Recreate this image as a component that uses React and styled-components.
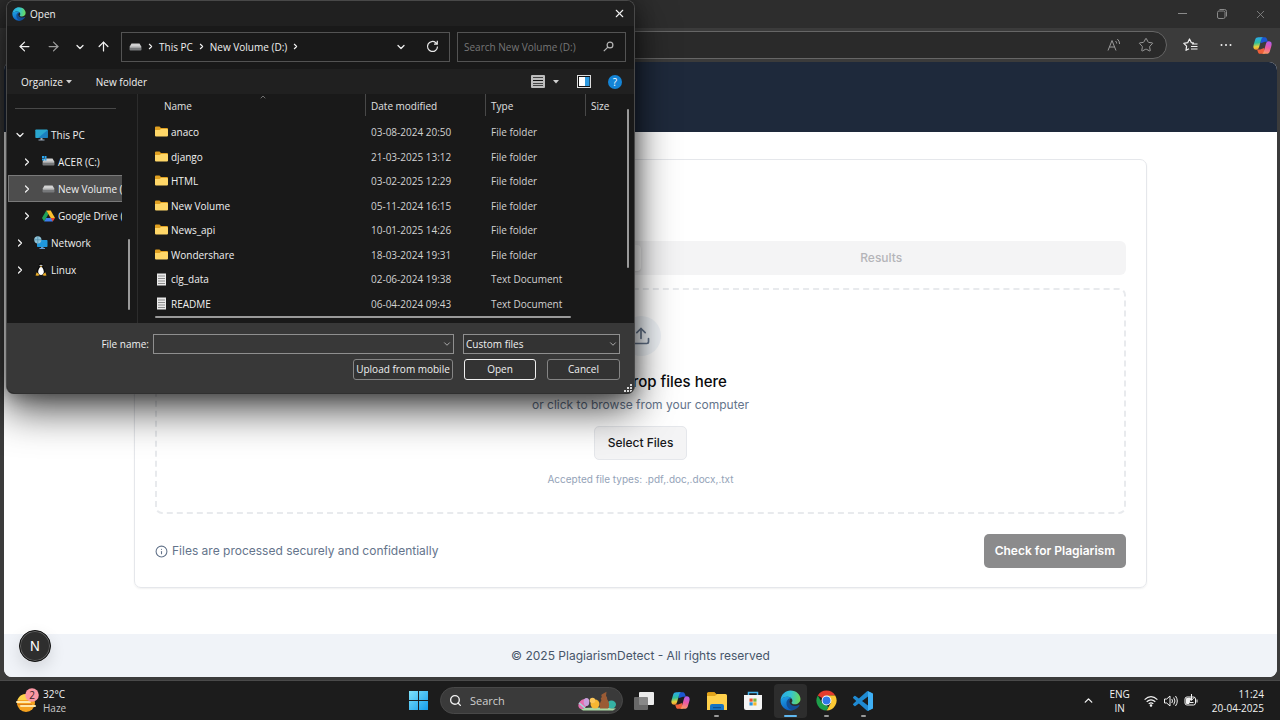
import React from "react";
import styled, { createGlobalStyle, css } from "styled-components";
import {
  ArrowLeft,
  ArrowRight,
  ArrowUp,
  ChevronDown,
  ChevronRight,
  ChevronUp,
  Info,
  Search,
  Star,
  Upload,
  X,
} from "lucide-react";

const ui = '"Open Sans", "Noto Sans", sans-serif';
const web = 'Inter, "Liberation Sans", sans-serif';

const GlobalStyle = createGlobalStyle`
  *, *::before, *::after { box-sizing: border-box; }
  body { margin: 0; background: #3b3b3b; }
  button, input, select { font: inherit; color: inherit; margin: 0; }
  svg { display: block; flex: none; }
`;

const Desktop = styled.div`
  position: relative;
  display: flex;
  flex-direction: column;
  min-height: 100vh;
  font-family: ${ui};
  font-size: 10px;
  line-height: 14px;
`;

const PlainButton = styled.button`
  display: flex;
  align-items: center;
  justify-content: center;
  padding: 0;
  border: 0;
  background: none;
  cursor: pointer;
`;

/* Browser window */

const WindowBar = styled.div`
  display: flex;
  justify-content: flex-end;
  height: 28px;
  background: #2d2d2d;
  color: #8a8a8a;
`;

const WindowButton = styled(PlainButton)`
  width: 39px;
`;

const BrowserBar = styled.div`
  display: flex;
  align-items: center;
  height: 34px;
  padding: 0 0 0 120px;
  background: #3b3b3b;
`;

const UrlBar = styled.div`
  flex: 1;
  display: flex;
  align-items: center;
  justify-content: flex-end;
  gap: 17px;
  height: 28px;
  padding-right: 12px;
  border: 1px solid #666;
  border-radius: 14px;
  background: #2a2a2a;
  color: #9a9a9a;
`;

const BrowserTools = styled.div`
  display: flex;
  width: 113px;
  padding-left: 5px;
  color: #f2f2f2;
`;

const BrowserTool = styled(PlainButton)`
  width: 36px;
`;

/* Web page */

const Page = styled.div`
  flex: 1;
  display: flex;
  flex-direction: column;
  margin: 0 3px 4px 4px;
  overflow: hidden;
  border-radius: 8px;
  background: #fff;
  font-family: ${web};
  font-size: 12px;
  line-height: 16px;
`;

const PageHeader = styled.header`
  height: 70px;
  background: #1e293b;
`;

const PageMain = styled.main`
  flex: 1;
  padding: 27px 24px;
`;

const Card = styled.section`
  max-width: 1013px;
  margin: 0 auto;
  padding: 81px 20px 19px;
  border: 1px solid #e5e7eb;
  border-radius: 7px;
  box-shadow: 0 1px 2px rgba(0, 0, 0, 0.06);
`;

const Tabs = styled.div`
  display: grid;
  grid-template-columns: 1fr 1fr;
  height: 34px;
  padding: 4px;
  border-radius: 6px;
  background: #f4f4f5;
`;

const Tab = styled.button`
  border: 0;
  border-radius: 4px;
  background: ${(p) => (p.$active ? "#fff" : "transparent")};
  box-shadow: ${(p) => (p.$active ? "0 1px 2px rgba(0,0,0,.1)" : "none")};
  color: ${(p) => (p.$active ? "#09090b" : "#b4b4b9")};
  font-weight: 500;
`;

const DropZone = styled.div`
  display: flex;
  flex-direction: column;
  align-items: center;
  margin: 13px 0 20px;
  padding: 26px 20px 25px;
  border: 2px dashed #e8eaed;
  border-radius: 7px;
`;

const UploadBadge = styled.div`
  display: grid;
  place-items: center;
  width: 40px;
  height: 40px;
  border-radius: 50%;
  background: #f1f5f9;
  color: #64748b;
`;

const DropTitle = styled.h3`
  margin: 16px 0 4px;
  color: #09090b;
  font-size: 15px;
  line-height: 20px;
  font-weight: 500;
`;

const DropHint = styled.p`
  margin: 0;
  padding: 1px 0;
  color: #64748b;
`;

const SelectFiles = styled.button`
  height: 34px;
  margin: 12px 0;
  padding: 0 13px;
  border: 1px solid #e5e7eb;
  border-radius: 5px;
  background: #f4f4f5;
  color: #18181b;
  font-weight: 500;
`;

const Accepted = styled.p`
  margin: 0;
  color: #94a3b8;
  font-size: 10px;
  line-height: 15px;
`;

const CardFooter = styled.div`
  display: flex;
  align-items: center;
  justify-content: space-between;
`;

const SecureNote = styled.p`
  display: flex;
  align-items: center;
  gap: 4px;
  margin: 0;
  color: #64748b;
`;

const CheckButton = styled.button`
  height: 34px;
  padding: 0 11px;
  border: 0;
  border-radius: 5px;
  background: #8b8b8c;
  color: #fff;
  font-weight: 600;
`;

const PageFooter = styled.footer`
  display: flex;
  align-items: center;
  justify-content: center;
  height: 43px;
  background: #f0f3f8;
  color: #475569;
`;

const NextBadge = styled.button`
  position: absolute;
  left: 19px;
  bottom: 58px;
  width: 32px;
  height: 32px;
  padding: 0;
  border: 1px solid #111;
  border-radius: 50%;
  background: #2e2e2e;
  box-shadow: 0 0 0 1px #666 inset, 0 6px 16px rgba(0, 0, 0, 0.12);
  color: #fff;
  font-family: ${web};
  font-size: 13px;
`;

/* File dialog */

const Dialog = styled.section`
  position: absolute;
  top: 0;
  left: 6px;
  display: flex;
  flex-direction: column;
  width: 629px;
  overflow: hidden;
  border: 1px solid #484848;
  border-bottom-color: #303030;
  border-radius: 8px;
  background: #191919;
  box-shadow: 0 16px 40px rgba(0, 0, 0, 0.7), 0 2px 18px rgba(0, 0, 0, 0.35);
  color: #f0f0f0;
`;

const DialogTitle = styled.header`
  display: flex;
  align-items: center;
  gap: 4px;
  height: 25px;
  padding: 0 8px 0 5px;
  background: #202020;
`;

const DialogHeading = styled.h2`
  flex: 1;
  margin: 0;
  font-size: 10px;
  font-weight: 400;
`;

const DialogNav = styled.nav`
  display: flex;
  align-items: center;
  height: 43px;
  padding: 0 8px 2px 3px;
`;

const NavButton = styled(PlainButton)`
  width: ${(p) => p.$width || 29}px;
  height: 28px;
  color: ${(p) => (p.$dim ? "#9c9c9c" : "#f0f0f0")};
`;

const AddressBox = styled.div`
  flex: 1;
  display: flex;
  align-items: center;
  gap: 4px;
  height: 30px;
  margin-left: 5px;
  padding: 0 3px 0 7px;
  border: 1px solid #535353;
`;

const Crumb = styled(PlainButton)`
  height: 28px;
`;

const Spacer = styled.span`
  flex: 1;
`;

const SearchBox = styled.label`
  display: flex;
  align-items: center;
  width: 169px;
  height: 30px;
  margin-left: 7px;
  padding: 0 11px 0 6px;
  border: 1px solid #535353;
  color: #b5b5b5;
`;

const SearchInput = styled.input`
  flex: 1;
  min-width: 0;
  padding: 0;
  border: 0;
  outline: 0;
  background: none;
  &::placeholder { color: #777; opacity: 1; }
`;

const CommandBar = styled.div`
  display: flex;
  align-items: center;
  height: 25px;
  padding: 0 12px 0 14px;
  background: #202020;
`;

const Command = styled(PlainButton)`
  gap: ${(p) => p.$gap || 3}px;
  margin-right: ${(p) => p.$after || 0}px;
`;

const Panes = styled.div`
  display: flex;
  height: 229px;
`;

const Sidebar = styled.aside`
  display: flex;
  width: 131px;
  border-right: 1px solid #2c2c2c;
`;

const Tree = styled.ul`
  display: grid;
  grid-template-columns: minmax(0, 1fr);
  grid-auto-rows: 1fr;
  width: 115px;
  height: 188px;
  margin: 0;
  padding: 27px 0 0 1px;
  list-style: none;
  background: linear-gradient(#484848, #484848) 8px 14px / 101px 1px no-repeat;
`;

const TreeRow = styled(PlainButton)`
  justify-content: flex-start;
  gap: 3px;
  width: 100%;
  height: 27px;
  padding-left: ${(p) => (p.$nested ? 13 : 6)}px;
  overflow: hidden;
  white-space: nowrap;
  ${(p) =>
    p.$selected &&
    css`
      border: 1px solid #7a7a7a;
      border-right: 0;
      padding-left: 12px;
      background: #4d4d4d;
    `}
`;

const TreeIcon = styled.span`
  display: flex;
  justify-content: center;
  flex: none;
  width: 14px;
  margin-left: 5px;
`;

const SideThumb = styled.span`
  align-self: flex-end;
  width: 2px;
  height: 71px;
  margin: 0 0 13px 6px;
  border-radius: 1px;
  background: #9a9a9a;
`;

const Files = styled.div`
  flex: 1;
  display: flex;
  padding-left: 17px;
`;

const FileColumn = styled.div`
  flex: 1;
  display: flex;
  flex-direction: column;
`;

const FileTable = styled.table`
  width: 100%;
  height: 222px;
  table-layout: fixed;
  border-collapse: collapse;
  text-align: left;
`;

const HeadCell = styled.th`
  position: relative;
  width: ${(p) => (p.$width ? p.$width + "px" : "auto")};
  height: 26px;
  padding: 0 0 2px ${(p) => (p.$first ? 9 : 6)}px;
  font-weight: 400;
  color: #e0e0e0;
  &::before {
    content: "";
    position: absolute;
    top: 0;
    left: 0;
    height: 22px;
    border-left: ${(p) => (p.$first ? "0" : "1px solid #484848")};
  }
`;

const SortMark = styled.span`
  position: absolute;
  left: 104px;
  top: -1px;
  color: #999;
`;

const Cell = styled.td`
  padding: 0 0 0 6px;
  color: #d2d2d2;
`;

const FileCell = styled.td`
  padding: 0;
`;

const FileName = styled.span`
  display: flex;
  align-items: center;
  gap: 3px;
`;

const ListThumb = styled.span`
  width: 416px;
  height: 2px;
  border-radius: 1px;
  background: #9a9a9a;
`;

const FileThumb = styled.span`
  width: 2px;
  height: 159px;
  margin: 15px 5px 0 0;
  border-radius: 1px;
  background: #9a9a9a;
`;

const DialogFooter = styled.footer`
  position: relative;
  display: grid;
  align-content: start;
  gap: 5px;
  height: 70px;
  padding: 11px 14px 13px;
  background: #383838;
`;

const FieldRow = styled.div`
  display: flex;
  align-items: center;
  justify-content: flex-end;
  height: 20px;
`;

const FieldLabel = styled.label`
  margin-right: 4px;
`;

const Combo = styled.div`
  position: relative;
  width: ${(p) => p.$width}px;
`;

const TypeCombo = styled(Combo)`
  margin-left: 9px;
`;

const comboField = css`
  display: block;
  width: 100%;
  height: 20px;
  padding: 0 18px 0 2px;
  border: 1px solid #8f8f8f;
  border-radius: 0;
  background: #383838;
  appearance: none;
`;

const NameInput = styled.input`
  ${comboField}
`;

const TypeSelect = styled.select`
  ${comboField}
  background: #333;
`;

const ComboArrow = styled.span`
  position: absolute;
  top: 5px;
  right: 2px;
  color: #c0c0c0;
  pointer-events: none;
`;

const DialogButton = styled.button`
  width: ${(p) => p.$width}px;
  height: 21px;
  margin-left: 11px;
  padding: 0;
  border: 1px solid ${(p) => (p.$primary ? "#f0f0f0" : "#858585")};
  border-radius: 3px;
  background: #333;
  white-space: nowrap;
`;

const Grip = styled.span`
  position: absolute;
  right: 1px;
  bottom: 0;
`;

/* Taskbar */

const Taskbar = styled.footer`
  display: grid;
  grid-template-columns: 1fr auto 1fr;
  align-items: center;
  height: 39px;
  background: #1c1c1c;
  box-shadow: 0 -1px 0 #4a4a4a;
  color: #f2f2f2;
`;

const Weather = styled(PlainButton)`
  justify-self: start;
  gap: 3px;
  margin-left: 16px;
  text-align: left;
`;

const Muted = styled.span`
  color: #c8c8c8;
`;

const Lines = styled.span`
  display: flex;
  flex-direction: column;
  text-align: ${(p) => p.$align || "left"};
`;

const TaskCenter = styled.div`
  display: flex;
  align-items: center;
  padding-left: 2px;
`;

const StartButton = styled(PlainButton)`
  width: 32px;
  height: 34px;
  margin-right: 6px;
`;

const TaskSearch = styled.label`
  display: flex;
  align-items: center;
  gap: 8px;
  width: 183px;
  height: 27px;
  margin-right: 4px;
  padding: 0 5px 0 8px;
  border: 1px solid #484848;
  border-radius: 14px;
  background: #3a3a3a;
`;

const TaskSearchInput = styled.input`
  flex: 1;
  min-width: 0;
  padding: 0;
  border: 0;
  outline: 0;
  background: none;
  font-size: 11px;
  &::placeholder { color: #cfcfcf; opacity: 1; }
`;

const TaskApps = styled.div`
  display: flex;
  justify-content: space-between;
  width: 253px;
`;

const TaskApp = styled(PlainButton)`
  position: relative;
  width: 33px;
  height: 34px;
  border-radius: 4px;
  background: ${(p) => (p.$active ? "#2d2d2d" : "transparent")};
  &::after {
    content: "";
    position: absolute;
    bottom: 1px;
    width: ${(p) => (p.$active ? 13 : 5)}px;
    height: 2px;
    border-radius: 1px;
    background: ${(p) => (p.$active ? "#60b8f0" : p.$open ? "#9a9a9a" : "transparent")};
  }
`;

const Tray = styled.div`
  display: flex;
  align-items: center;
  justify-self: end;
  padding-right: 16px;
`;

const Language = styled(Lines)`
  margin: 0 14px;
`;

const TrayIcons = styled.div`
  display: flex;
  align-items: center;
  gap: 6px;
  margin-right: 14px;
`;

/* Drawings */

const EdgeLogo = ({ size, id }) => (
  <svg width={size} height={size} viewBox="0 0 24 24">
    <defs>
      <linearGradient id={id + "a"} x1="0" y1=".4" x2="1" y2=".5">
        <stop offset="0" stopColor="#26a9e8" />
        <stop offset=".5" stopColor="#35c3d0" />
        <stop offset="1" stopColor="#6bdb59" />
      </linearGradient>
      <linearGradient id={id + "b"} x1="0" y1="0" x2=".4" y2="1">
        <stop offset="0" stopColor="#1fa5e6" />
        <stop offset="1" stopColor="#0e62c4" />
      </linearGradient>
    </defs>
    <path fill={`url(#${id}a)`} d="M.6 11.8C1.2 5 6.3.6 12 .6c7 0 11.4 5 11.4 9.800 0 3.800-3 6-6.300 6-2.600 0-3.900-1-3.900-1.800 0-.5 1-1 1-2.600C14.200 9.700 12 7.600 8.400 7.600 4.300 7.600 1.400 10 .6 11.800Z" />
    <path fill={`url(#${id}b)`} d="M.6 12C1.200 9.400 4.300 7.600 8.400 7.600c2 0 3.800.8 4.600 1.600-2 1-3 3-3 5.200 0 4.600 3.500 8 6.500 8-1.300.7-2.900 1-4.500 1C5.600 23.400.6 18.400.6 12Z" />
    <path fill="#124f96" d="M12.800 9c-3.400.2-5.400 3-5.400 6 0 4.800 4 8.600 9 7.600 2.500-.9 4.500-2.600 5.700-4.600.4-.7-.1-1.100-.7-.8-4 1.900-9 1-10.300-2.700-.8-2.300.2-4.500 1.700-5.500Z" />
  </svg>
);

const CopilotLogo = ({ size, id }) => (
  <svg width={size} height={size} viewBox="0 0 24 24">
    <defs>
      <linearGradient id={id + "a"} x1=".3" y1="0" x2=".4" y2="1">
        <stop offset="0" stopColor="#2aa8f0" />
        <stop offset=".45" stopColor="#2fbf9a" />
        <stop offset=".75" stopColor="#e6d33c" />
        <stop offset="1" stopColor="#f58a2c" />
      </linearGradient>
      <linearGradient id={id + "b"} x1=".6" y1="0" x2=".4" y2="1">
        <stop offset="0" stopColor="#b05cf0" />
        <stop offset=".5" stopColor="#ec5aa2" />
        <stop offset="1" stopColor="#fb9a62" />
      </linearGradient>
    </defs>
    <path fill="#1b57d2" d="M9 1.500h6.200c1.600 0 2.200 1.200 2.700 3l.8 2.800H15L9.500 9Z" />
    <path fill="#f0603a" d="M15 22.500H8.800c-1.600 0-2.300-1.200-2.800-3L5.200 17H9l5-2Z" />
    <path fill={`url(#${id}a)`} d="M7 1.500h5.600c-1.300.4-1.900 1.800-2.400 3.600L7.700 14c-.6 2-1.400 3.500-3.500 3.500C.8 17.500-.1 14.700.8 11.400l2-6.900C3.400 2.600 4.700 1.500 7 1.500Z" />
    <path fill={`url(#${id}b)`} d="M17 22.500h-5.600c1.300-.4 1.900-1.800 2.400-3.600L16.300 10c.6-2 1.400-3.500 3.500-3.500 3.400 0 4.300 2.800 3.400 6.100l-2 6.900c-.6 1.900-1.900 3-4.200 3Z" />
  </svg>
);

const FolderIcon = () => (
  <svg width="13" height="12" viewBox="0 0 13 12">
    <path fill="#e0a021" d="M0 1.500Q0 .5 1 .5h3.500L6 2h6q1 0 1 1v3H0Z" />
    <path fill="#ffd768" d="M0 4h4.500L6 3h6q1 0 1 1v5.500q0 1-1 1H1q-1 0-1-1Z" />
  </svg>
);

const DocIcon = () => (
  <svg width="13" height="13" viewBox="0 0 13 13">
    <path fill="#e9e9e9" d="M2 .5h9v12H2Z" />
    <path stroke="#8b8b8b" strokeWidth="1" d="M3 3h7M3 5.500h7M3 8h7M3 10.500h7" />
  </svg>
);

const DriveIcon = ({ system }) => (
  <svg width="13" height="12" viewBox="0 0 13 12">
    <path fill="#d2d2d2" d="M2.500 2.500h8l2 3.500H.5Z" />
    <rect x=".5" y="5.500" width="12" height="4" rx="1" fill="#77797b" />
    <path stroke="#e6e6e6" strokeWidth=".8" d="M1 6h11" />
    {system && <path fill="#2ba5ee" d="M0 0h2v2H0zM2.500 0h2v2h-2zM0 2.500h2v2H0zM2.500 2.500h2v2h-2z" />}
  </svg>
);

const MonitorIcon = () => (
  <svg width="13" height="12" viewBox="0 0 13 12">
    <rect x=".3" y=".5" width="12.400" height="8.500" rx=".8" fill="#2aa7cf" />
    <path fill="#1b7fc0" d="M12.700 1v7.200q0 .8-.8.800H3Z" />
    <path fill="#9ab" d="M5.500 9h2v1.500h2v1h-6v-1h2Z" />
  </svg>
);

const NetworkIcon = () => (
  <svg width="14" height="13" viewBox="0 0 14 13">
    <rect x="3" y="4" width="10.500" height="7" rx=".8" fill="#1f97dc" />
    <path fill="#69c" d="M7 11h2.500v1H11v1H5.500v-1H7Z" />
    <circle cx="3.800" cy="3.800" r="3.600" fill="#8fc3d8" />
    <path stroke="#4c8ba8" strokeWidth=".7" fill="none" d="M.3 3.800h7M3.800.2v7.200" />
  </svg>
);

const GoogleDriveIcon = () => (
  <svg width="13" height="12" viewBox="0 0 13 12">
    <path fill="#20a15a" d="M4.300.5 0 8l2.200 3.500L6.500 4Z" />
    <path fill="#fbc02d" d="M4.300.5h4.400L13 8H8.700Z" />
    <path fill="#3b7ded" d="M4.200 8H11l-.2 3.500H2.200Z" />
    <path fill="#e5422f" d="M8.700 8H13l-2.200 3.500Z" />
  </svg>
);

const LinuxIcon = () => (
  <svg width="12" height="13" viewBox="0 0 12 13">
    <path fill="#0b0b0b" d="M6 0c1.700 0 2.300 1.400 2.200 3.200.3 1.600 2.200 3 2.200 6.200L8 12H4L1.600 9.400c0-3.200 1.900-4.600 2.200-6.200C3.700 1.400 4.300 0 6 0Z" />
    <path fill="#fff" d="M6 3.700c1.200 0 2.800 3 2.800 5.100C8.800 10.500 7.700 12 6 12s-2.800-1.500-2.800-3.200C3.200 6.700 4.800 3.700 6 3.700Z" />
    <circle cx="5.200" cy="2.400" r=".6" fill="#fff" />
    <circle cx="6.800" cy="2.400" r=".6" fill="#fff" />
    <path fill="#e9ab26" d="M4.800 3.300h2.400L6 4.400ZM.5 12.500l1.200-3.200L4.600 12q-1 1-4.100.5ZM11.500 12.500l-1.200-3.200L7.400 12q1 1 4.100.5Z" />
  </svg>
);

const Triangle = () => (
  <svg width="6" height="4" viewBox="0 0 6 4">
    <path fill="#cfcfcf" d="M0 0h6L3 3.500Z" />
  </svg>
);

const RefreshIcon = () => (
  <svg width="13" height="13" viewBox="0 0 13 13" fill="none" stroke="#e6e6e6" strokeWidth="1.200">
    <path d="M11.500 6.500a5 5 0 1 1-1.700-3.800L11.200 4M11.300.8V4.200H8" />
  </svg>
);

const ViewIcon = () => (
  <svg width="14" height="13" viewBox="0 0 14 13">
    <rect width="14" height="13" rx="1" fill="#bdbdbd" />
    <path stroke="#444" strokeWidth="1" d="M2 2.500h10M2 8.500h10M2 10.500h10" />
    <path stroke="#111" strokeWidth="1" d="M2 5.500h10" />
  </svg>
);

const PaneIcon = () => (
  <svg width="14" height="13" viewBox="0 0 14 13">
    <rect x=".5" y=".5" width="13" height="12" fill="#111" stroke="#ddd" />
    <rect x="2" y="2" width="6" height="9" fill="#fff" />
    <rect x="8" y="2" width="4.500" height="9" fill="#2e9ae0" />
  </svg>
);

const HelpMark = styled.span`
  display: grid;
  place-items: center;
  width: 14px;
  height: 14px;
  border-radius: 50%;
  background: #1484d6;
  color: #fff;
`;

const MagnifierIcon = () => (
  <svg width="11" height="11" viewBox="0 0 11 11" fill="none" stroke="currentColor" strokeWidth="1.200">
    <circle cx="7" cy="4" r="2.900" />
    <path d="M4.900 6.100.8 10.200" />
  </svg>
);

const GripIcon = () => (
  <svg width="9" height="9" viewBox="0 0 9 9">
    <path fill="#d8d8d8" d="M6 0h2v2H6zM3 3h2v2H3zM6 3h2v2H6zM0 6h2v2H0zM3 6h2v2H3zM6 6h2v2H6z" />
  </svg>
);

const ReadAloudIcon = () => (
  <svg width="14" height="14" viewBox="0 0 14 14" fill="none" stroke="currentColor" strokeWidth="1">
    <path d="M1 12.500 5 2.500l4 10M2.500 9h5M8.500 3q1.200 1 1.200 2.500M10.300 1q2.300 1.800 2.300 5" />
  </svg>
);

const FavoritesIcon = () => (
  <svg width="15" height="14" viewBox="0 0 15 14" fill="none" stroke="currentColor" strokeWidth="1.200" strokeLinejoin="round">
    <path d="M11 5 8.400 4.700 6.500 1 4.700 4.700.8 5.300l2.800 2.800L3 12.300l3-1.600M9 6h5.500M8 8.500h6.500M8 11h6.500" />
  </svg>
);

const RestoreIcon = () => (
  <svg width="10" height="10" viewBox="0 0 10 10" fill="none" stroke="currentColor">
    <rect x=".5" y="2" width="7.500" height="7.500" rx="1.500" />
    <path d="M2.500 .5h5q2 0 2 2v5" />
  </svg>
);

const HazeIcon = () => (
  <svg width="24" height="26" viewBox="0 0 24 26">
    <circle cx="10" cy="15" r="9" fill="#f5a21f" />
    <path fill="#fbd34c" d="M1.500 12a9 9 0 0 1 17 0Z" />
    <path stroke="#ffe7a8" strokeWidth="2" strokeLinecap="round" d="M1 14h13M5 18h14" />
    <path stroke="#d97a16" strokeWidth="1" d="M1 16.500h15" />
    <circle cx="16" cy="7" r="6.800" fill="#fb97a4" />
    <text x="16" y="10.500" textAnchor="middle" fontSize="10" fontFamily="Open Sans, sans-serif" fill="#3a2226">2</text>
  </svg>
);

const WindowsLogo = () => (
  <svg width="19" height="19" viewBox="0 0 19 19">
    <defs>
      <linearGradient id="win" x1="0" y1="0" x2="1" y2="1">
        <stop offset="0" stopColor="#7fe3fb" />
        <stop offset="1" stopColor="#149bea" />
      </linearGradient>
    </defs>
    <path fill="url(#win)" d="M0 0h9v9H0zM10 0h9v9h-9zM0 10h9v9H0zM10 10h9v9h-9z" />
  </svg>
);

const EasterArt = () => (
  <svg width="40" height="20" viewBox="0 0 40 20">
    <path fill="#a9d8a4" d="M3 17.500q17-2 36 0l-3 2H6Z" />
    <ellipse cx="6" cy="13" rx="4" ry="5.500" transform="rotate(40 6 13)" fill="#e56fae" />
    <path stroke="#9be0dd" strokeWidth="1.500" d="m2 12 6 5" />
    <ellipse cx="9.500" cy="11" rx="2.800" ry="4" fill="#c9a0dc" />
    <circle cx="18" cy="13" r="4.500" fill="#f7b733" />
    <circle cx="15.500" cy="9.500" r="2.800" fill="#fbc65a" />
    <ellipse cx="34.500" cy="13.500" rx="4.500" ry="4" fill="#35b3a4" />
    <path fill="#9a5b35" d="M25 6c-1-1-.8-2.500.5-3L29.500.8 29 5c1 1 1.500 2 1 3 2 2 3 7 1 9.500h-8c-1-3 0-6 1.500-8.500-1-1-1-2 .5-3Z" />
  </svg>
);

const TaskViewIcon = () => (
  <svg width="20" height="18" viewBox="0 0 20 18">
    <rect x="5" y="0" width="15" height="13" rx="1" fill="#ececec" />
    <rect x="0" y="5" width="14" height="13" rx="1" fill="#777" fillOpacity=".85" />
  </svg>
);

const ExplorerIcon = () => (
  <svg width="20" height="18" viewBox="0 0 20 18">
    <path fill="#dc9a14" d="M0 1.500Q0 0 1.500 0h6L9 2H0Z" />
    <path fill="#e2a41c" d="M0 1h8l2 1.500V6H0Z" />
    <path fill="#ffd04b" d="M0 4h8l2-2h8.500Q20 2 20 3.500V18H0Z" />
    <path fill="#1674c4" d="M3 18v-4q0-2 2-2h10q2 0 2 2v4Z" />
    <path fill="#0b4f91" d="M6 15h8v1.200H6Z" />
  </svg>
);

const StoreIcon = () => (
  <svg width="20" height="20" viewBox="0 0 20 20">
    <path fill="none" stroke="#45b4ee" strokeWidth="1.500" d="M5.500 5V1.500h9V5" />
    <path fill="#f4f4f4" d="M1 4h18v13q0 2-2 2H3q-2 0-2-2Z" />
    <path fill="#e8502f" d="M6.500 7.500h3.200v3.200H6.500Z" />
    <path fill="#7db53a" d="M10.300 7.500h3.200v3.200h-3.200Z" />
    <path fill="#2a94dc" d="M6.500 11.300h3.200v3.200H6.500Z" />
    <path fill="#f5b62c" d="M10.300 11.300h3.200v3.200h-3.200Z" />
  </svg>
);

const ChromeIcon = () => (
  <svg width="21" height="21" viewBox="0 0 24 24">
    <path fill="#e33b2e" d="M12 12 2.040 6.250A11.500 11.500 0 0 1 21.960 6.250H12Z" />
    <path fill="#fcc934" d="M12 6.250h9.960A11.500 11.500 0 0 1 12 23.500l4.980-8.600Z" />
    <path fill="#1e9e4a" d="M2.040 6.250 7 14.900l5 2.900 2.200 1.700L12 23.500A11.500 11.500 0 0 1 2.040 6.250Z" />
    <circle cx="12" cy="12" r="5.600" fill="#fff" />
    <circle cx="12" cy="12" r="4.500" fill="#3078e8" />
  </svg>
);

const CodeIcon = () => (
  <svg width="20" height="20" viewBox="0 0 24 24">
    <path
      fill="#1f8ad2"
      d="M23.150 2.587L18.210.21a1.494 1.494 0 0 0-1.705.29l-9.460 8.630-4.120-3.128a.999.999 0 0 0-1.276.057L.327 7.261A1 1 0 0 0 .326 8.740L3.899 12 .326 15.260a1 1 0 0 0 .001 1.479L1.650 17.940a.999.999 0 0 0 1.276.057l4.120-3.128 9.460 8.630a1.492 1.492 0 0 0 1.704.29l4.942-2.377A1.500 1.500 0 0 0 24 20.060V3.939a1.500 1.500 0 0 0-.85-1.352zm-5.146 14.861L10.826 12l7.178-5.448v10.896z"
    />
    <path fill="#3fb0f5" d="m18 .2 5.200 2.400q.8.500.8 1.400v16q0 1-.8 1.400L18 23.800Z" />
  </svg>
);

const WifiIcon = () => (
  <svg width="14" height="12" viewBox="0 0 14 12" fill="none" stroke="currentColor" strokeWidth="1.200">
    <path d="M.6 4.600q6.400-6 12.800 0M2.700 6.800q4.300-4 8.600 0M4.700 8.900q2.300-2 4.600 0" />
    <circle cx="7" cy="10.500" r=".7" fill="currentColor" />
  </svg>
);

const SpeakerIcon = () => (
  <svg width="14" height="12" viewBox="0 0 14 12" fill="none" stroke="currentColor">
    <path d="M.5 4h2.200L6 1v10L2.700 8H.5ZM7.800 4q1.400 2 0 4M9.700 2.500q2.500 3.500 0 7M11.500 1q3.600 5 0 10" />
  </svg>
);

const BatteryIcon = () => (
  <svg width="14" height="13" viewBox="0 0 14 13" fill="none" stroke="currentColor">
    <rect x="1" y="3" width="10.500" height="8" rx="2" />
    <path d="M13 5.500v3" />
    <path fill="currentColor" d="M2.500 4.500h4L5 9.500H2.500Z" />
    <path d="M7.500 0v6M5 3.500l2.500 3 2.500-3M6 8.500h3.500" />
  </svg>
);

/* Data */

const tree = [
  { name: "This PC", icon: <MonitorIcon />, open: true },
  { name: "ACER (C:)", icon: <DriveIcon system />, nested: true },
  { name: "New Volume (D:)", icon: <DriveIcon />, nested: true, selected: true },
  { name: "Google Drive (G:)", icon: <GoogleDriveIcon />, nested: true },
  { name: "Network", icon: <NetworkIcon /> },
  { name: "Linux", icon: <LinuxIcon /> },
];

const files = [
  ["anaco", "03-08-2024 20:50", "File folder"],
  ["django", "21-03-2025 13:12", "File folder"],
  ["HTML", "03-02-2025 12:29", "File folder"],
  ["New Volume", "05-11-2024 16:15", "File folder"],
  ["News_api", "10-01-2025 14:26", "File folder"],
  ["Wondershare", "18-03-2024 19:31", "File folder"],
  ["clg_data", "02-06-2024 19:38", "Text Document"],
  ["README", "06-04-2024 09:43", "Text Document"],
];

function FileDialog() {
  return (
    <Dialog role="dialog" aria-label="Open">
      <DialogTitle>
        <EdgeLogo size={14} id="edge-small" />
        <DialogHeading>Open</DialogHeading>
        <PlainButton aria-label="Close dialog"><X size={13} strokeWidth={2} /></PlainButton>
      </DialogTitle>
      <DialogNav>
        <NavButton aria-label="Back"><ArrowLeft size={15} strokeWidth={2} /></NavButton>
        <NavButton aria-label="Forward" $dim><ArrowRight size={15} strokeWidth={2} /></NavButton>
        <NavButton aria-label="Recent locations" $width={23}><ChevronDown size={12} strokeWidth={2.5} /></NavButton>
        <NavButton aria-label="Up" $width={25}><ArrowUp size={15} strokeWidth={2} /></NavButton>
        <AddressBox>
          <DriveIcon />
          <ChevronRight size={9} strokeWidth={3} />
          <Crumb>This PC</Crumb>
          <ChevronRight size={9} strokeWidth={3} />
          <Crumb>New Volume (D:)</Crumb>
          <ChevronRight size={9} strokeWidth={3} />
          <Spacer />
          <NavButton aria-label="Previous locations" $width={26}><ChevronDown size={12} strokeWidth={2.5} /></NavButton>
          <NavButton aria-label="Refresh" $width={28}><RefreshIcon /></NavButton>
        </AddressBox>
        <SearchBox>
          <SearchInput aria-label="Search New Volume (D:)" placeholder="Search New Volume (D:)" />
          <MagnifierIcon />
        </SearchBox>
      </DialogNav>
      <CommandBar>
        <Command $after={24}>Organize <Triangle /></Command>
        <Command>New folder</Command>
        <Spacer />
        <Command aria-label="Change view" $gap={8} $after={18}><ViewIcon /><Triangle /></Command>
        <Command aria-label="Preview pane" $after={17}><PaneIcon /></Command>
        <Command aria-label="Help"><HelpMark>?</HelpMark></Command>
      </CommandBar>
      <Panes>
        <Sidebar>
          <Tree>
            {tree.map((t) => (
              <li key={t.name}>
                <TreeRow $nested={t.nested} $selected={t.selected}>
                  {t.open ? <ChevronDown size={12} strokeWidth={2.5} /> : <ChevronRight size={12} strokeWidth={2.5} />}
                  <TreeIcon>{t.icon}</TreeIcon>
                  {t.name}
                </TreeRow>
              </li>
            ))}
          </Tree>
          <SideThumb />
        </Sidebar>
        <Files>
          <FileColumn>
            <FileTable>
              <thead>
                <tr>
                  <HeadCell $first $width={210}>Name<SortMark><ChevronUp size={8} /></SortMark></HeadCell>
                  <HeadCell $width={120}>Date modified</HeadCell>
                  <HeadCell $width={100}>Type</HeadCell>
                  <HeadCell>Size</HeadCell>
                </tr>
              </thead>
              <tbody>
                {files.map(([name, date, type]) => (
                  <tr key={name}>
                    <FileCell>
                      <FileName>{type === "File folder" ? <FolderIcon /> : <DocIcon />}{name}</FileName>
                    </FileCell>
                    <Cell>{date}</Cell>
                    <Cell>{type}</Cell>
                    <Cell />
                  </tr>
                ))}
              </tbody>
            </FileTable>
            <ListThumb />
          </FileColumn>
          <FileThumb />
        </Files>
      </Panes>
      <DialogFooter>
        <FieldRow>
          <FieldLabel htmlFor="file-name">File name:</FieldLabel>
          <Combo $width={301}>
            <NameInput id="file-name" />
            <ComboArrow><ChevronDown size={10} /></ComboArrow>
          </Combo>
          <TypeCombo $width={157}>
            <TypeSelect aria-label="File type">
              <option>Custom files</option>
            </TypeSelect>
            <ComboArrow><ChevronDown size={10} /></ComboArrow>
          </TypeCombo>
        </FieldRow>
        <FieldRow>
          <DialogButton $width={100}>Upload from mobile</DialogButton>
          <DialogButton $width={72} $primary>Open</DialogButton>
          <DialogButton $width={73}>Cancel</DialogButton>
        </FieldRow>
        <Grip><GripIcon /></Grip>
      </DialogFooter>
    </Dialog>
  );
}

function WebPage() {
  return (
    <Page>
      <PageHeader />
      <PageMain>
        <Card>
          <Tabs role="tablist">
            <Tab role="tab" aria-selected="true" aria-label="Upload" $active />
            <Tab role="tab" aria-selected="false">Results</Tab>
          </Tabs>
          <DropZone>
            <UploadBadge><Upload size={20} /></UploadBadge>
            <DropTitle>Drag and drop files here</DropTitle>
            <DropHint>or click to browse from your computer</DropHint>
            <SelectFiles>Select Files</SelectFiles>
            <Accepted>Accepted file types: .pdf,.doc,.docx,.txt</Accepted>
          </DropZone>
          <CardFooter>
            <SecureNote><Info size={13} />Files are processed securely and confidentially</SecureNote>
            <CheckButton>Check for Plagiarism</CheckButton>
          </CardFooter>
        </Card>
      </PageMain>
      <PageFooter>© 2025 PlagiarismDetect - All rights reserved</PageFooter>
    </Page>
  );
}

export default function App() {
  return (
    <Desktop>
      <GlobalStyle />
      <WindowBar>
        <WindowButton aria-label="Minimize">
          <svg width="10" height="10" viewBox="0 0 10 10"><path stroke="currentColor" d="M0 4.500h9" /></svg>
        </WindowButton>
        <WindowButton aria-label="Restore"><RestoreIcon /></WindowButton>
        <WindowButton aria-label="Close"><X size={13} strokeWidth={1.5} /></WindowButton>
      </WindowBar>
      <BrowserBar>
        <UrlBar>
          <PlainButton aria-label="Read aloud"><ReadAloudIcon /></PlainButton>
          <PlainButton aria-label="Add to favorites"><Star size={16} strokeWidth={1.5} /></PlainButton>
        </UrlBar>
        <BrowserTools>
          <BrowserTool aria-label="Favorites"><FavoritesIcon /></BrowserTool>
          <BrowserTool aria-label="More">
            <svg width="12" height="4" viewBox="0 0 12 4" fill="currentColor">
              <circle cx="1.500" cy="2" r="1" /><circle cx="6" cy="2" r="1" /><circle cx="10.500" cy="2" r="1" />
            </svg>
          </BrowserTool>
          <BrowserTool aria-label="Copilot"><CopilotLogo size={19} id="cp1" /></BrowserTool>
        </BrowserTools>
      </BrowserBar>
      <WebPage />
      <Taskbar>
        <Weather>
          <HazeIcon />
          <Lines><span>32°C</span><Muted>Haze</Muted></Lines>
        </Weather>
        <TaskCenter>
          <StartButton aria-label="Start"><WindowsLogo /></StartButton>
          <TaskSearch>
            <Search size={13} strokeWidth={2.5} />
            <TaskSearchInput aria-label="Search" placeholder="Search" />
            <EasterArt />
          </TaskSearch>
          <TaskApps>
            <TaskApp aria-label="Task view"><TaskViewIcon /></TaskApp>
            <TaskApp aria-label="Copilot app"><CopilotLogo size={19} id="cp2" /></TaskApp>
            <TaskApp aria-label="File Explorer" $open><ExplorerIcon /></TaskApp>
            <TaskApp aria-label="Store"><StoreIcon /></TaskApp>
            <TaskApp aria-label="Edge" $active><EdgeLogo size={21} id="edge-task" /></TaskApp>
            <TaskApp aria-label="Chrome" $open><ChromeIcon /></TaskApp>
            <TaskApp aria-label="Code editor" $open><CodeIcon /></TaskApp>
          </TaskApps>
        </TaskCenter>
        <Tray>
          <PlainButton aria-label="Hidden icons"><ChevronUp size={13} strokeWidth={2.5} /></PlainButton>
          <Language $align="center"><span>ENG</span><span>IN</span></Language>
          <TrayIcons><WifiIcon /><SpeakerIcon /><BatteryIcon /></TrayIcons>
          <Lines $align="right"><span>11:24</span><span>20-04-2025</span></Lines>
        </Tray>
      </Taskbar>
      <NextBadge aria-label="Next.js tools">N</NextBadge>
      <FileDialog />
    </Desktop>
  );
}
